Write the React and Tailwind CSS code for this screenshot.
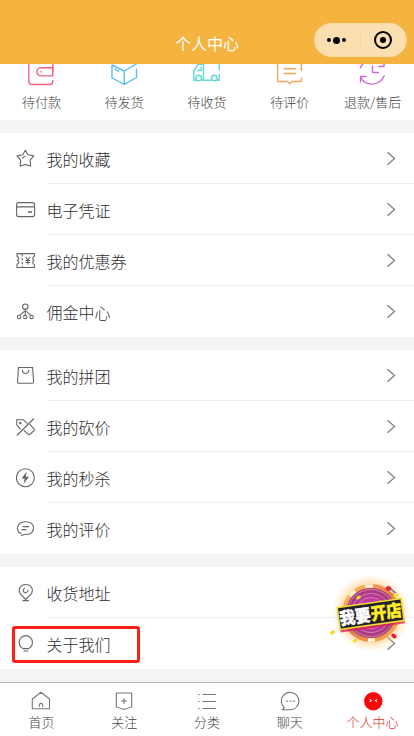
import React from "react";

const FONT = "font-['Noto_Sans_CJK_SC','Noto_Sans',sans-serif]";

const StarIcon = () => (
  <>
    <path d="M9.4 1.200l2.600 4.500 5.800 1.200-3.700 4.300.6 5.900-5.300-1.700-5.300 1.700.6-5.900L1 6.900l5.800-1.200z" strokeLinejoin="round" />
    <path d="M6.500 9.800c.3-1.500 1.400-2.200 3-2.500" />
  </>
);
const CardIcon = () => (
  <>
    <rect x=".6" y="2.600" width="18" height="14" rx="2" />
    <path d="M.6 6.900h18M12 12h4" strokeWidth="1.400" />
  </>
);
const CouponIcon = () => (
  <>
    <path d="M1 2.600h17.400v3c-2.200.7-2.200 2.700-.6 3.900-1.500 1.300-1.500 3.200.6 4v3H1v-3.200c2.600-.8 2.400-3.200.3-3.900C3.300 8.300 3 6.200 1 5.600z" strokeLinejoin="round" />
    <path d="M6.200 3v13" strokeDasharray="2.500 1.500" />
    <path d="M9.600 6l2.200 3.300L14 6M11.800 9.300v4.200M9.600 9.500H14M9.600 11.500H14" />
  </>
);
const NetworkIcon = () => (
  <>
    <circle cx="9.300" cy="4.700" r="2.700" />
    <path d="M9.300 7.400v6M8.600 9.200L3.800 13.300M10 9.200l4.800 4.100" />
    <circle cx="3" cy="15" r="1.700" />
    <circle cx="9.300" cy="15" r="1.700" />
    <circle cx="15.600" cy="15" r="1.700" />
  </>
);
const BagIcon = () => (
  <>
    <path d="M2.400 1.500h14.200l1 14.300q0 1.500-1.300 1.500H3q-1.500 0-1.400-1.500z" />
    <path d="M6.300 4c.2 4.600 6.300 4.600 6.500 0" />
  </>
);
const BargainIcon = () => (
  <>
    <path d="M4.500 12.300L.8 8V2.700h6.500l4.200 4M.8 18.500L18 1.500" />
    <path d="M13.600 7.200l4.600 4.800q.5.700 0 1.300l-4.300 4.200q-.7.600-1.400 0l-4.700-4.300" />
    <circle cx="4.300" cy="6" r=".7" />
  </>
);
const FlashIcon = () => (
  <>
    <circle cx="9.400" cy="9.700" r="9" />
    <path d="M10.500 3.800L5.600 10.400h3.100l-1 5.300 5.300-7H9.800z" fill="currentColor" stroke="none" />
  </>
);
const CommentIcon = () => (
  <>
    <path d="M5.600 14.700C2.800 14 1.500 11.700 1.500 9.200c0-4 3-6.500 8-6.500s8 2.500 8 6.300c0 4.300-3.600 6.300-7.300 6.500H8.200L5 16.800" />
    <path d="M6.500 7.600h6.800M5.500 10.700h5" strokeWidth="1.300" />
  </>
);
const PinIcon = () => (
  <>
    <path d="M9.800 16.500L5 11.700C.8 6.500 4.800 1.500 9.800 1.500s9 5 4.700 10.200z" />
    <path d="M11.800 6.800A2.300 2.300 0 1 1 9 5.200M6.500 17.600h6.300" />
  </>
);
const BulbIcon = () => (
  <path d="M7.200 14.600C4.800 13.500 3.200 10.900 3.200 8.200a6.600 6.600 0 0 1 13.200 0c0 2.700-1.600 5.300-4 6.400zM7.400 17h4.800" />
);

const groups = [
  [
    ["我的收藏", StarIcon],
    ["电子凭证", CardIcon],
    ["我的优惠券", CouponIcon],
    ["佣金中心", NetworkIcon],
  ],
  [
    ["我的拼团", BagIcon],
    ["我的砍价", BargainIcon],
    ["我的秒杀", FlashIcon],
    ["我的评价", CommentIcon],
  ],
  [
    ["收货地址", PinIcon],
    ["关于我们", BulbIcon],
  ],
];

function MenuRow({ label, Icon, last }) {
  return (
    <div className="flex h-[51px] pl-4">
      <svg className="mt-4 h-5 w-5 shrink-0 text-[#666]" viewBox="0 0 20 20" fill="none" stroke="currentColor" strokeWidth="1.1">
        <Icon />
      </svg>
      <div className={"ml-[11px] flex flex-1 items-start justify-between pr-[18px] " + (last ? "" : "border-b border-[#ececec]")}>
        <span className="-ml-[0.5px] pt-[14px] text-[16px] leading-6 font-light text-[#2e2e2e]">{label}</span>
        <svg className="mt-[17px] h-4 w-[10px]" viewBox="0 0 10 16" fill="none" stroke="#858585" strokeWidth="1.400">
          <path d="M1.500 2.200l7 6.300-7 6.300" />
        </svg>
      </div>
    </div>
  );
}

const orders = [
  ["待付款", "#f2607f", (
    <>
      <path d="M24.800 12V3M.8 0v21q0 3.500 3 3.500h18.500q2.500 0 2.500-3.500v-1" />
      <path d="M24.800 7.700H13a4.100 4.100 0 0 0 0 8.200h11.800z" />
      <path d="M12.500 11.800h1.500" />
    </>
  )],
  ["待发货", "#5bbdf0", (
    <>
      <path d="M1 5v13l12.300 6.300L25.500 17.500V8.500M1 5l12.300 6L25.500 4M13.300 11v13.300" />
      <path d="M3.500 9l4.500 2.700" />
    </>
  )],
  ["待收货", "#5fd9d2", (
    <>
      <path d="M2.800 20.300H.8v-9.500L5 4.300h5.500v16H9M10.500 20.300h8M24 20.300h2.200V14M26.200 10V4M8.300 6.800v3.700H4" />
      <circle cx="5.700" cy="18" r="2.800" fill="white" />
      <circle cx="21.300" cy="18" r="2.800" fill="white" />
    </>
  )],
  ["待评价", "#f7a55c", (
    <>
      <path d="M1.700 0v21.500H11.500l2.200 2.300 2.200-2.300h9.400v-4M25.300 11V0" />
      <path d="M7.500 8.700h12.500M7.500 13.500h12.500" />
    </>
  )],
  ["退款/售后", "#cc68d9", (
    <>
      <path d="M1.500 17C6 26.500 20 27 25.500 15.500M1.500 22.500V16.500h6M1 8l3-4.500M19 6.500h6V1" />
      <path d="M13.500 5.500v7h6.500" />
    </>
  )],
];

const tabs = [
  ["首页", (
    <path d="M2.300 9L11 2.200 19.500 9v9.700H2.300zM9.300 17v-2.500q1.700-2.300 3.400 0V17" strokeLinejoin="round" />
  )],
  ["关注", (
    <path d="M3.300 3H18.700v14Q15 18 11 19.500 7 18 3.300 17zM11 8v6M8 11h6" strokeLinejoin="round" />
  )],
  ["分类", (
    <path d="M6.500 4.500H20M6.500 11.500H20M6.500 18.500H20M2 4.500h1.500M2 11.500h1.500M2 18.500h1.500" />
  )],
  ["聊天", (
    <>
      <path d="M5.200 17.500a8.700 8.700 0 1 1 6 2.300H3.200q1.600-1 2-2.300z" strokeLinejoin="round" />
      <path d="M7.300 11.300h1.400M10.800 11.300h1.400M14.300 11.300h1.400" strokeWidth="1.500" />
    </>
  )],
  ["个人中心", (
    <>
      <circle cx="11.300" cy="11.300" r="9.200" fill="#fa0808" stroke="none" />
      <path d="M7.700 9.300l1.500 1.300-1.500 1.300M14.900 9.300l-1.500 1.300 1.500 1.300" stroke="white" />
    </>
  )],
];

function ShopBadge() {
  return (
    <svg className="absolute top-[573px] left-[322px] h-[80px] w-[92px]" viewBox="0 0 92 80">
      <defs>
        <radialGradient id="glow">
          <stop offset=".6" stopColor="#ffb94d" stopOpacity=".75" />
          <stop offset="1" stopColor="#ffd38a" stopOpacity="0" />
        </radialGradient>
        <radialGradient id="disc">
          <stop offset="0" stopColor="#e936c5" />
          <stop offset=".55" stopColor="#b93a9d" />
          <stop offset="1" stopColor="#98406f" />
        </radialGradient>
        <linearGradient id="ring" x1="0" y1="0" x2="1" y2="1">
          <stop offset="0" stopColor="#ffc25c" />
          <stop offset=".5" stopColor="#e57a50" />
          <stop offset="1" stopColor="#ffad4c" />
        </linearGradient>
      </defs>
      <circle cx="49" cy="40" r="39" fill="url(#glow)" />
      <circle cx="49" cy="40" r="27" fill="url(#disc)" stroke="url(#ring)" strokeWidth="4" />
      <g fill="none" stroke="#f390b8" strokeWidth=".7">
        <circle cx="49" cy="40" r="23.500" />
        <circle cx="49" cy="40" r="19.500" />
        <circle cx="49" cy="40" r="15.500" />
      </g>
      <path d="M28 23a27 27 0 0 1 5-5M43 13.500a27 27 0 0 1 8-.5M46 67h7" stroke="#fff4d6" strokeWidth="3.500" fill="none" />
      <g transform="rotate(-8 49 42)">
        <rect x="16.500" y="33" width="65" height="22" fill="#d91c50" opacity=".75" />
        <rect x="16.500" y="30" width="64.500" height="22" fill="#25202c" stroke="#ecdf2c" strokeWidth="1.600" />
        <g className="font-['Noto_Sans_CJK_SC',sans-serif] text-[17px] font-black" strokeWidth=".4">
          <text x="17.500" y="47.800" fill="#fff" stroke="#fff" textLength="31" lengthAdjust="spacingAndGlyphs">我要</text>
          <text x="49" y="47.300" fill="#ffed24" stroke="#ffed24" textLength="31" lengthAdjust="spacingAndGlyphs">开店</text>
        </g>
      </g>
      <g fill="#f7de2d">
        <ellipse cx="36.500" cy="24.500" rx="2.500" ry="1.600" transform="rotate(-25 36.500 24.500)" />
        <ellipse cx="10.500" cy="59.500" rx="2.800" ry="1.800" transform="rotate(-25 10.500 59.500)" />
        <ellipse cx="33" cy="67.500" rx="2.500" ry="1.700" transform="rotate(-20 33 67.500)" />
        <ellipse cx="74" cy="22.500" rx="2.800" ry="1.700" transform="rotate(-20 74 22.500)" />
      </g>
      <path d="M69 16l5 4" stroke="#85798a" strokeWidth="1.400" />
      <ellipse cx="66.500" cy="15.500" rx="2.800" ry="2.200" fill="#e32336" />
      <ellipse cx="72" cy="63" rx="3" ry="2" fill="#e32336" transform="rotate(35 72 63)" />
    </svg>
  );
}

export default function App() {
  return (
    <div className={"relative flex h-[736px] w-[414px] flex-col overflow-hidden bg-[#f4f4f4] " + FONT}>
      <header className="relative flex h-16 shrink-0 items-end justify-center bg-[#f5b33f] pb-[9px]">
        <h1 className="text-[16px] leading-6 font-normal text-white">个人中心</h1>
        <div className="absolute top-[23px] left-[314px] flex h-[34px] w-[93px] items-center rounded-full border border-[#f4d8a4] bg-[#fbdfb0]">
          <div className="flex w-[45px] items-center justify-center gap-[2px] pr-[2px]">
            <i className="h-1 w-1 rounded-full bg-black" />
            <i className="h-[7px] w-[7px] rounded-full bg-black" />
            <i className="h-1 w-1 rounded-full bg-black" />
          </div>
          <i className="h-5 w-px bg-[#f1d5a2]" />
          <div className="flex flex-1 justify-center pr-[2px]">
            <div className="flex h-[18px] w-[18px] items-center justify-center rounded-full border-2 border-black">
              <i className="h-[6px] w-[6px] rounded-full bg-black" />
            </div>
          </div>
        </div>
      </header>

      <section className="grid h-14 shrink-0 grid-cols-5 overflow-hidden bg-white">
        {orders.map(([label, color, art]) => (
          <div key={label} className="flex flex-col items-center">
            <svg className="-mt-1 h-[27px] w-[27px] shrink-0" viewBox="0 0 27 27" fill="none" stroke={color} strokeWidth="1.400" strokeLinejoin="round">
              {art}
            </svg>
            <span className="mt-[5px] text-[13px] leading-5 font-light whitespace-nowrap text-[#444]">{label}</span>
          </div>
        ))}
      </section>

      <main className="mt-[13px] flex flex-1 flex-col gap-[13px]">
        {groups.map((rows) => (
          <section key={rows[0][0]} className="bg-white">
            {rows.map(([label, Icon], i) => (
              <MenuRow key={label} label={label} Icon={Icon} last={i === rows.length - 1} />
            ))}
          </section>
        ))}
      </main>

      <nav className="grid h-[54px] shrink-0 grid-cols-5 border-t border-[#b2b2b2] bg-white">
        {tabs.map(([label, art], i) => (
          <div key={label} className="flex flex-col items-center pt-[7px]">
            <svg className="h-[22px] w-[22px]" viewBox="0 0 22 22" fill="none" stroke="#777" strokeWidth="1.100">
              {art}
            </svg>
            <span className={"text-[13px] leading-5 font-light " + (i === 4 ? "text-[#e02c25]" : "text-[#444]")}>{label}</span>
          </div>
        ))}
      </nav>

      <div className="absolute top-[626px] left-[12px] h-[37px] w-[128px] rounded-[3px] border-3 border-[#ff2015]" />
      <ShopBadge />
    </div>
  );
}
